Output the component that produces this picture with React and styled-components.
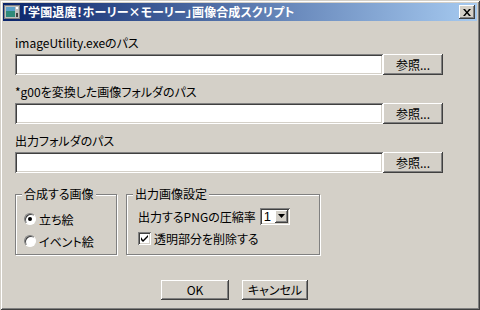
import React from "react";
import styled, { createGlobalStyle } from "styled-components";

const GlobalStyle = createGlobalStyle`
  html, body {
    margin: 0;
    padding: 0;
    background: #d4d0c8;
  }
  * {
    box-sizing: border-box;
  }
`;

const Window = styled.div`
  width: 480px;
  height: 310px;
  padding: 3px;
  background: #d4d0c8;
  box-shadow: inset 1px 1px 0 #d4d0c8, inset -1px -1px 0 #404040,
    inset 2px 2px 0 #ffffff, inset -2px -2px 0 #808080;
  font-family: "Noto Sans CJK JP", "Liberation Sans", sans-serif;
  font-size: 12px;
  font-feature-settings: "palt";
  color: #000;
  display: flex;
  flex-direction: column;
`;

const TitleBar = styled.div`
  height: 18px;
  display: flex;
  align-items: center;
  padding: 0 2px 0 1px;
  background: linear-gradient(to right, #0a246a, #a6caf0);
`;

const TitleText = styled.span`
  flex: 1;
  margin-left: 2px;
  color: #fff;
  font-weight: bold;
  font-size: 12px;
  line-height: 18px;
  white-space: nowrap;
  letter-spacing: 0.1px;
`;

const CloseButton = styled.div`
  width: 16px;
  height: 14px;
  background: #d4d0c8;
  box-shadow: inset -1px -1px 0 #404040, inset 1px 1px 0 #ffffff,
    inset -2px -2px 0 #808080;
  display: flex;
  align-items: center;
  justify-content: center;
`;

const Content = styled.div`
  padding: 14px 0 0 12px;
  display: flex;
  flex-direction: column;
  gap: 9px;
`;

const PathBlock = styled.div`
  display: flex;
  flex-direction: column;
`;

const Label = styled.div`
  height: 19px;
  line-height: 16px;
  white-space: nowrap;
`;

const FieldRow = styled.div`
  display: flex;
  height: 21px;
`;

const TextField = styled.div`
  width: 368px;
  height: 21px;
  background: #fff;
  box-shadow: inset 1px 1px 0 #808080, inset -1px -1px 0 #ffffff,
    inset 2px 2px 0 #404040, inset -2px -2px 0 #d4d0c8;
`;

const Button = styled.div`
  width: ${(p) => p.$w}px;
  height: ${(p) => p.$h}px;
  background: #d4d0c8;
  box-shadow: inset -1px -1px 0 #404040, inset 1px 1px 0 #ffffff,
    inset -2px -2px 0 #808080;
  display: flex;
  align-items: center;
  justify-content: center;
  line-height: 1;
  white-space: nowrap;
`;

const GroupRow = styled.div`
  display: flex;
  gap: 9px;
  margin-top: 12px;
`;

const Group = styled.div`
  position: relative;
  width: ${(p) => p.$w}px;
  height: 61px;
  border: 1px solid #808080;
  box-shadow: 1px 1px 0 #ffffff, inset 1px 1px 0 #ffffff;
  padding: ${(p) => p.$pad};
  display: flex;
  flex-direction: column;
`;

const Legend = styled.span`
  position: absolute;
  top: -9px;
  left: 6px;
  padding: 0 2px;
  background: #d4d0c8;
  line-height: 16px;
  white-space: nowrap;
`;

const OptionRow = styled.div`
  display: flex;
  align-items: center;
  height: ${(p) => p.$h}px;
  white-space: nowrap;
`;

const Radio = styled.span`
  width: 12px;
  height: 12px;
  border-radius: 50%;
  background: #fff;
  border: 1px solid;
  border-color: #808080 #ffffff #ffffff #808080;
  box-shadow: inset 1px 1px 0 #404040;
  display: flex;
  align-items: center;
  justify-content: center;
  margin-right: 3px;
  flex-shrink: 0;
`;

const Dot = styled.span`
  width: 4px;
  height: 4px;
  border-radius: 50%;
  background: #000;
`;

const CheckBox = styled.span`
  width: 13px;
  height: 13px;
  background: #fff;
  box-shadow: inset 1px 1px 0 #808080, inset -1px -1px 0 #ffffff,
    inset 2px 2px 0 #404040, inset -2px -2px 0 #d4d0c8;
  display: flex;
  align-items: center;
  justify-content: center;
  margin-right: 3px;
  flex-shrink: 0;
`;

const Combo = styled.div`
  margin-left: 4px;
  width: 30px;
  height: 17px;
  background: #fff;
  box-shadow: inset 1px 1px 0 #808080, inset -1px -1px 0 #ffffff,
    inset 2px 2px 0 #404040, inset -2px -2px 0 #d4d0c8;
  display: flex;
  align-items: center;
  padding: 2px;
`;

const ComboValue = styled.span`
  flex: 1;
  padding-left: 2px;
  line-height: 13px;
  font-family: "Liberation Sans", sans-serif;
  font-size: 13px;
`;

const ComboArrow = styled.span`
  width: 13px;
  height: 13px;
  background: #d4d0c8;
  box-shadow: inset -1px -1px 0 #404040, inset 1px 1px 0 #ffffff,
    inset -2px -2px 0 #808080;
  display: flex;
  align-items: center;
  justify-content: center;
`;

const ButtonRow = styled.div`
  display: flex;
  gap: 13px;
  margin-top: 16px;
  margin-left: 146px;
`;

const AppIcon = () => (
  <svg width="16" height="16" viewBox="0 0 16 16">
    <rect x="0.5" y="1.5" width="15" height="13" fill="#c0c0c0" stroke="#808080" />
    <rect x="2" y="3" width="9" height="10" fill="#2f8a7a" />
    <rect x="2" y="3" width="9" height="4" fill="#5aa0c8" />
    <rect x="12" y="3" width="2" height="2" fill="#fff" />
    <rect x="12" y="9" width="2" height="4" fill="#404040" />
  </svg>
);

const CloseGlyph = () => (
  <svg width="8" height="7" viewBox="0 0 8 7">
    <path d="M0 0h2l2 2.5L6 0h2L5 3.5 8 7H6L4 4.5 2 7H0l3-3.5z" fill="#000" />
  </svg>
);

const CheckMark = () => (
  <svg width="7" height="7" viewBox="0 0 7 7">
    <path d="M0 2v3l2 2 5-5V0L2 5z" fill="#000" />
  </svg>
);

const DownArrow = () => (
  <svg width="7" height="4" viewBox="0 0 7 4">
    <path d="M0 0h7L3.5 4z" fill="#000" />
  </svg>
);

const paths = [
  "imageUtility.exeのパス",
  "*g00を変換した画像フォルダのパス",
  "出力フォルダのパス",
];

export default function App() {
  return (
    <>
      <GlobalStyle />
      <Window>
        <TitleBar>
          <AppIcon />
          <TitleText>「学園退魔！ホーリー×モーリー」画像合成スクリプト</TitleText>
          <CloseButton>
            <CloseGlyph />
          </CloseButton>
        </TitleBar>
        <Content>
          {paths.map((label) => (
            <PathBlock key={label}>
              <Label>{label}</Label>
              <FieldRow>
                <TextField />
                <Button $w={60} $h={21}>参照...</Button>
              </FieldRow>
            </PathBlock>
          ))}
          <GroupRow>
            <Group $w={102} $pad="13px 0 0 8px">
              <Legend>合成する画像</Legend>
              <OptionRow $h={22}>
                <Radio>
                  <Dot />
                </Radio>
                立ち絵
              </OptionRow>
              <OptionRow $h={22}>
                <Radio />
                イベント絵
              </OptionRow>
            </Group>
            <Group $w={194} $pad="10px 0 0 11px">
              <Legend>出力画像設定</Legend>
              <OptionRow $h={22}>
                出力するPNGの圧縮率
                <Combo>
                  <ComboValue>1</ComboValue>
                  <ComboArrow>
                    <DownArrow />
                  </ComboArrow>
                </Combo>
              </OptionRow>
              <OptionRow $h={22}>
                <CheckBox>
                  <CheckMark />
                </CheckBox>
                透明部分を削除する
              </OptionRow>
            </Group>
          </GroupRow>
          <ButtonRow>
            <Button $w={68} $h={20}>OK</Button>
            <Button $w={66} $h={20}>キャンセル</Button>
          </ButtonRow>
        </Content>
      </Window>
    </>
  );
}
